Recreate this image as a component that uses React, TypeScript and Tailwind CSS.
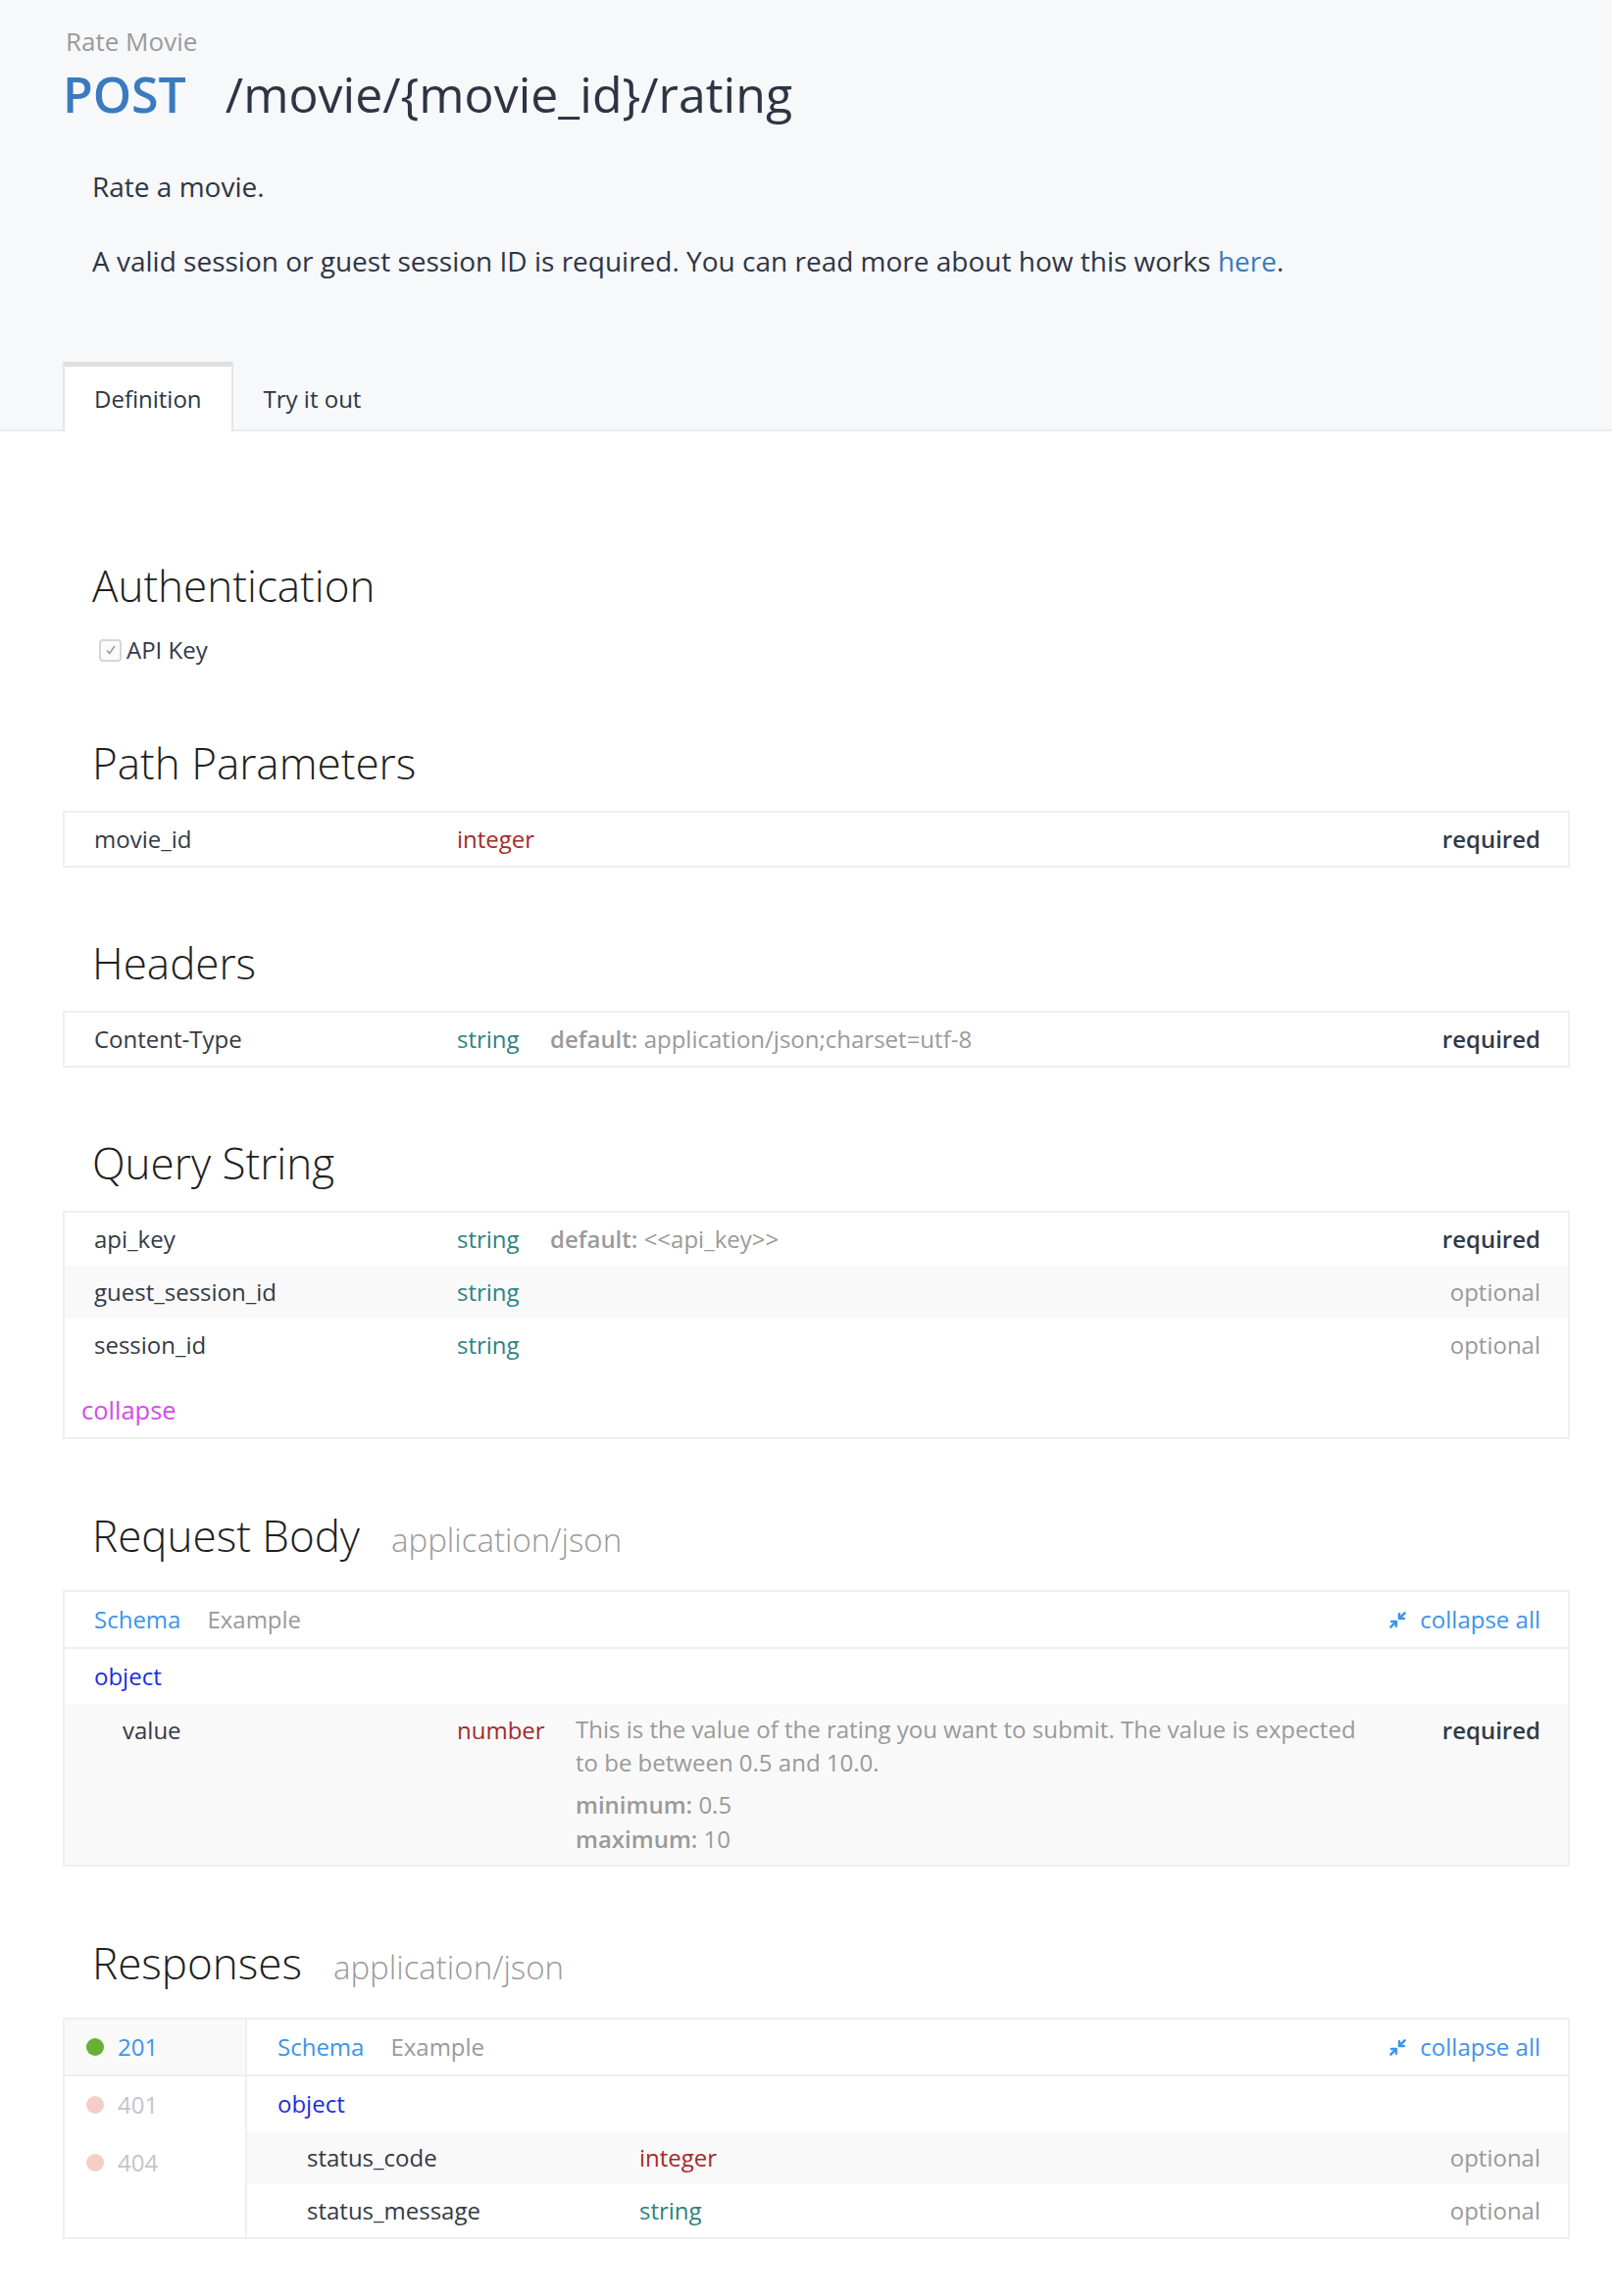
import { Minimize2 } from "lucide-react";

const typeColor: Record<string, string> = {
    integer: "text-[#a52a2a]",
    number: "text-[#a52a2a]",
    string: "text-[#2e8383]",
};

function Heading({ children, sub, className = "" }: { children: React.ReactNode; sub?: string; className?: string }) {
    return (
        <h2 className={`flex items-baseline pl-[30px] text-[44px] font-light leading-[50px] text-[#1f1f1f] ${className}`}>
            {children}
            {sub && <span className="ml-[32px] text-[33px] leading-[40px] text-[#9a9a9a]">{sub}</span>}
        </h2>
    );
}

function ParamRow({ name, type, def, required, shaded }: { name: string; type: string; def?: string; required?: boolean; shaded?: boolean }) {
    return (
        <div className={`flex h-[54px] items-center pl-[30px] pr-[28px] ${shaded ? "bg-[#f9f9f9]" : ""}`}>
            <div className="w-[370px] text-[#333a46]">{name}</div>
            <div className={`w-[95px] ${typeColor[type]}`}>{type}</div>
            <div className="flex-1 text-[#9a9a9a]">
                {def && (
                    <>
                        <span className="font-semibold">default:</span> {def}
                    </>
                )}
            </div>
            {required ? (
                <div className="font-semibold text-[#333a46]">required</div>
            ) : (
                <div className="text-[#9a9a9a]">optional</div>
            )}
        </div>
    );
}

function SchemaBar({ left }: { left: string }) {
    return (
        <div className={`flex h-[58px] items-center border-b-2 border-[#efefef] ${left} pr-[28px]`}>
            <span className="text-[#3d94ea]">Schema</span>
            <span className="ml-[27px] text-[#9a9a9a]">Example</span>
            <span className="ml-auto flex items-center text-[#3d94ea]">
                <Minimize2 size={19} strokeWidth={3.2} className="mr-[13px]" />
                collapse all
            </span>
        </div>
    );
}

export default function App() {
    return (
        <div className="min-h-[2342px] bg-white font-['Open_Sans',sans-serif] text-[24px] leading-[36px]">
            <div className="border-b-2 border-[#ebebeb] bg-[#f7f8fa] pl-[64px]">
                <div className="pt-[24px] pl-[3px] text-[26px] text-[#9a9a9a]">Rate Movie</div>
                <div className="flex items-center text-[50px] leading-[72px]">
                    <span className="font-semibold text-[#3a7bbf]">POST</span>
                    <span className="ml-[40px] text-[#2d3544]">/movie/{"{movie_id}"}/rating</span>
                </div>
                <div className="pl-[30px] text-[28px] leading-[42px] text-[#2d3544]">
                    <p className="mt-[37px]">Rate a movie.</p>
                    <p className="mt-[34px]">
                        A valid session or guest session ID is required. You can read more about how this works{" "}
                        <a className="text-[#3a7bbf]">here</a>.
                    </p>
                </div>
                <div className="mt-[82px] flex text-[#2d3544]">
                    <div className="-mb-[2px] border-x-2 border-t-[5px] border-x-[#e6e6e6] border-t-[#e0e0e0] bg-white px-[30px] pt-[15px] pb-[15px]">
                        Definition
                    </div>
                    <div className="px-[31px] pt-[20px] pb-[13px]">Try it out</div>
                </div>
            </div>

            <div className="pl-[64px] pr-[43px]">
                <Heading className="mt-[132px]">Authentication</Heading>
                <div className="mt-[23px] flex items-center pl-[37px] text-[#333a46]">
                    <span className="mr-[5px] flex h-[23px] w-[23px] items-center justify-center rounded-[4px] border-2 border-[#d6d6d6] bg-[#fbfbfb]">
                        <svg viewBox="0 0 16 16" className="h-[14px] w-[14px]" fill="none" stroke="#9a9a9a" strokeWidth="1.8">
                            <path d="M3.5 8.5 L6.5 12 L12.5 3.5" />
                        </svg>
                    </span>
                    API Key
                </div>

                <Heading className="mt-[72px]">Path Parameters</Heading>
                <div className="mt-[24px] border-2 border-[#efefef]">
                    <ParamRow name="movie_id" type="integer" required />
                </div>

                <Heading className="mt-[72px]">Headers</Heading>
                <div className="mt-[24px] border-2 border-[#efefef]">
                    <ParamRow name="Content-Type" type="string" def="application/json;charset=utf-8" required />
                </div>

                <Heading className="mt-[72px]">Query String</Heading>
                <div className="mt-[24px] border-2 border-[#efefef]">
                    <ParamRow name="api_key" type="string" def="<<api_key>>" required />
                    <ParamRow name="guest_session_id" type="string" shaded />
                    <ParamRow name="session_id" type="string" />
                    <div className="mt-[21px] mb-[10px] pl-[17px] text-[25.5px] text-[#d54bed]">collapse</div>
                </div>

                <Heading className="mt-[73px]" sub="application/json">
                    Request Body
                </Heading>
                <div className="mt-[31px] border-2 border-[#efefef]">
                    <SchemaBar left="pl-[30px]" />
                    <div className="flex h-[56px] items-center pl-[30px] text-[#1b2de0]">object</div>
                    <div className="flex bg-[#f9f9f9] pt-[9px] pb-[9px] pl-[59px] pr-[28px]">
                        <div className="w-[341px] text-[#333a46]">value</div>
                        <div className={`w-[121px] ${typeColor.number}`}>number</div>
                        <div className="w-[810px] text-[#9a9a9a]">
                            <p className="leading-[34px]">
                                This is the value of the rating you want to submit. The value is expected to be between 0.5 and 10.0.
                            </p>
                            <p className="mt-[8px] leading-[35px]">
                                <span className="font-semibold">minimum:</span> 0.5
                            </p>
                            <p className="leading-[35px]">
                                <span className="font-semibold">maximum:</span> 10
                            </p>
                        </div>
                        <div className="ml-auto font-semibold text-[#333a46]">required</div>
                    </div>
                </div>

                <Heading className="mt-[73px]" sub="application/json">
                    Responses
                </Heading>
                <div className="mt-[31px] flex border-2 border-[#efefef]">
                    <div className="w-[186px] shrink-0 border-r-2 border-[#efefef]">
                        <div className="flex h-[58px] items-center border-b-2 border-[#efefef] bg-[#f9f9f9] pl-[22px] text-[#3d94ea]">
                            <span className="mr-[14px] h-[18px] w-[18px] rounded-full bg-[#66b132]" />
                            201
                        </div>
                        <div className="flex h-[58px] items-center pl-[22px] text-[#c4c4c8]">
                            <span className="mr-[14px] h-[18px] w-[18px] rounded-full bg-[#f5cdc7]" />
                            401
                        </div>
                        <div className="flex h-[60px] items-center pl-[22px] text-[#c4c4c8]">
                            <span className="mr-[14px] h-[18px] w-[18px] rounded-full bg-[#f5cdc7]" />
                            404
                        </div>
                    </div>
                    <div className="flex-1">
                        <SchemaBar left="pl-[31px]" />
                        <div className="flex h-[56px] items-center pl-[31px] text-[#1b2de0]">object</div>
                        <div className="flex h-[54px] items-center bg-[#f9f9f9] pl-[61px] pr-[28px]">
                            <div className="w-[339px] text-[#333a46]">status_code</div>
                            <div className={typeColor.integer}>integer</div>
                            <div className="ml-auto text-[#9a9a9a]">optional</div>
                        </div>
                        <div className="flex h-[54px] items-center pl-[61px] pr-[28px]">
                            <div className="w-[339px] text-[#333a46]">status_message</div>
                            <div className={typeColor.string}>string</div>
                            <div className="ml-auto text-[#9a9a9a]">optional</div>
                        </div>
                    </div>
                </div>
            </div>
        </div>
    );
}
